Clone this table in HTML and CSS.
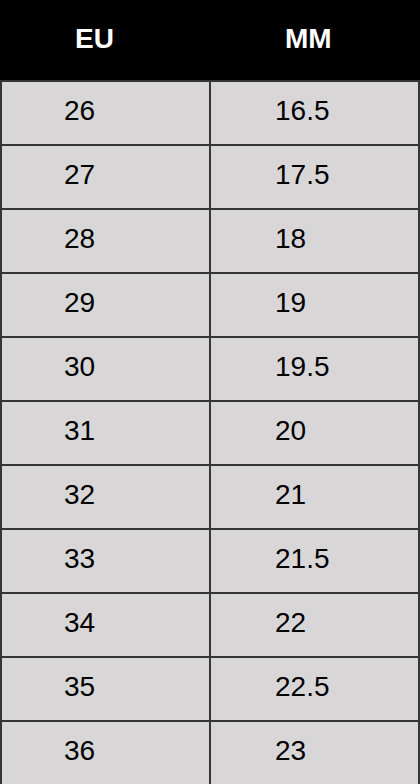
FILE: index.html
```html
<!DOCTYPE html>
<html>
<head>
<meta charset="utf-8">
<link rel="stylesheet" href="styles.css">
</head>
<body>
<div class="chart">
  <div class="head">
    <div class="hcell">EU</div>
    <div class="hcell">MM</div>
  </div>
  <div class="row"><div class="cell">26</div><div class="cell">16.5</div></div>
  <div class="row"><div class="cell">27</div><div class="cell">17.5</div></div>
  <div class="row"><div class="cell">28</div><div class="cell">18</div></div>
  <div class="row"><div class="cell">29</div><div class="cell">19</div></div>
  <div class="row"><div class="cell">30</div><div class="cell">19.5</div></div>
  <div class="row"><div class="cell">31</div><div class="cell">20</div></div>
  <div class="row"><div class="cell">32</div><div class="cell">21</div></div>
  <div class="row"><div class="cell">33</div><div class="cell">21.5</div></div>
  <div class="row"><div class="cell">34</div><div class="cell">22</div></div>
  <div class="row"><div class="cell">35</div><div class="cell">22.5</div></div>
  <div class="row"><div class="cell">36</div><div class="cell">23</div></div>
</div>
</body>
</html>
```
FILE: styles.css
```css
html, body {
  margin: 0;
  padding: 0;
  background: #d8d6d7;
}
body {
  font-family: "Liberation Sans", Arial, sans-serif;
  overflow: hidden;
}
.chart {
  width: 420px;
}
.head {
  display: grid;
  grid-template-columns: 210px 210px;
  height: 80px;
  background: #000;
  color: #fff;
}
.hcell {
  font-size: 28px;
  font-weight: bold;
  line-height: 32px;
  padding: 23px 0 0 75px;
}
.row {
  display: grid;
  grid-template-columns: 207px 207px;
  gap: 2px;
  padding: 2px 2px 0 2px;
  background: #353535;
}
.cell {
  background: #d8d6d7;
  height: 62px;
  box-sizing: border-box;
  padding: 13px 0 0 62px;
  font-size: 28px;
  line-height: 32px;
  color: #000;
}
.cell + .cell {
  padding-left: 64px;
}
```
